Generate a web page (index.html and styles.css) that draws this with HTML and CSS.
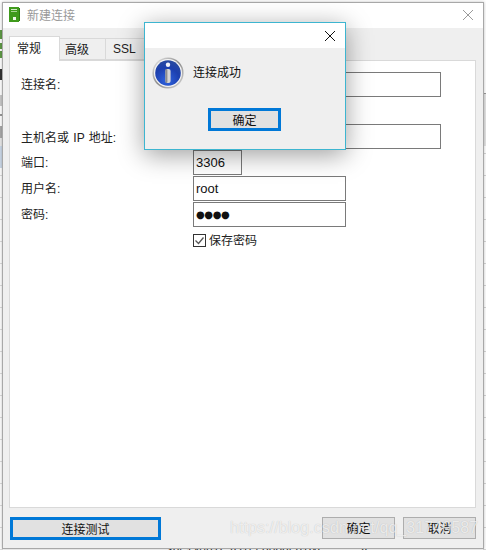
FILE: index.html
```html
<!DOCTYPE html>
<html lang="zh">
<head>
<meta charset="utf-8">
<title>新建连接</title>
<link rel="stylesheet" href="styles.css">
</head>
<body>
<div class="desktop">
  <div class="strip left"></div>
  <div class="strip right"></div>
  <div class="behind-row"><span>*8514081F7D1559098581W</span><span class="behind-y">Y</span></div>
  <section class="win main">
    <header class="titlebar">
      <svg class="appicon" width="11" height="15" viewBox="0 0 11 15"><rect width="10" height="15" fill="#3f9a1c"/><rect x="10" y="1" width="1" height="13" fill="#2b7a10"/><rect x="2" y="2" width="6" height="1" fill="#d5ebc9"/><rect x="2" y="4" width="6" height="1" fill="#a9d394"/><rect x="4" y="10" width="3" height="3" fill="#eef7e8"/></svg>
      <span class="title">新建连接</span>
      <svg class="close" width="12" height="12" viewBox="0 0 12 12"><path d="M1 1l10 10M11 1L1 11" stroke="#9a9a9a" fill="none"/></svg>
    </header>
    <div class="body">
      <nav class="tabs">
        <span class="tab active">常规</span>
        <span class="tab t2">高级</span>
        <span class="tab t3">SSL</span>
      </nav>
      <div class="panel">
        <div class="row r-name"><label>连接名:</label><span class="input wide"></span></div>
        <div class="row r-host"><label>主机名或 IP 地址:</label><span class="input wide"></span></div>
        <div class="row"><label>端口:</label><span class="input port">3306</span></div>
        <div class="row"><label>用户名:</label><span class="input mid">root</span></div>
        <div class="row"><label>密码:</label><span class="input mid dots">●●●●</span></div>
        <div class="row r-check"><label></label><span class="check"><svg width="13" height="13" viewBox="0 0 13 13"><rect x=".5" y=".5" width="12" height="12" fill="#fff" stroke="#333"/><path d="M2.5 6.5l3 3 5-6" fill="none" stroke="#555" stroke-width="1.3"/></svg><span class="check-text">保存密码</span></span></div>
      </div>
      <footer class="actions">
        <button class="btn primary test">连接测试</button>
        <span class="spacer"></span>
        <button class="btn plain">确定</button>
        <button class="btn plain">取消</button>
      </footer>
    </div>
  </section>
  <section class="win dialog">
    <header class="dlg-title">
      <svg class="close" width="12" height="12" viewBox="0 0 12 12"><path d="M1 1l10 10M11 1L1 11" stroke="#111" fill="none"/></svg>
    </header>
    <div class="dlg-body">
      <div class="dlg-msg">
        <svg width="32" height="32" viewBox="0 0 32 32">
          <defs>
            <radialGradient id="blue" cx=".45" cy=".8" r=".85"><stop offset="0" stop-color="#2f63e0"/><stop offset=".6" stop-color="#1c3fae"/><stop offset="1" stop-color="#2a4c9c"/></radialGradient>
            <linearGradient id="rim" x1="0" y1="0" x2="1" y2="1"><stop offset="0" stop-color="#f0f0f0"/><stop offset=".5" stop-color="#8b8b8b"/><stop offset="1" stop-color="#dcdcdc"/></linearGradient>
          </defs>
          <circle cx="16" cy="16" r="15.6" fill="url(#rim)"/>
          <circle cx="16" cy="16" r="14" fill="#f4f4f4"/>
          <circle cx="16" cy="16" r="12.8" fill="url(#blue)"/>
          <circle cx="16" cy="7.8" r="2.2" fill="#f2f4fa"/>
          <rect x="13.4" y="12" width="5.2" height="14" rx="2" fill="#d6d6d6"/>
          <rect x="13.4" y="12" width="2" height="14" rx="1" fill="#8d8d8d"/>
        </svg>
        <span class="dlg-text">连接成功</span>
      </div>
      <button class="btn primary ok">确定</button>
    </div>
  </section>
  <div class="watermark">https://blog.csdn.net/qq_31749587</div>
</div>
</body>
</html>
```
FILE: styles.css
```css
* { box-sizing: border-box; }
html, body { margin: 0; height: 100%; }
body { font-family: "Liberation Sans", "Noto Sans CJK SC", sans-serif; font-size: 12px; color: #111; background: #fff; overflow: hidden; }
.desktop { position: relative; width: 486px; height: 550px; overflow: hidden; background: #fff; }
.strip { position: absolute; top: 0; width: 3px; height: 550px; }
.strip.left { left: 0; background:
  linear-gradient(#fff 0 30px, #5f9a46 30px 39px, #fff 39px 43px, #5f9a46 43px 49px, #fff 49px 51px, #5f9a46 51px 58px, #fff 58px 69px, #333 69px 80px, #fff 80px 95px, #c9c9c9 95px 106px, #fff 106px 114px, #999 114px 116px, #fff 116px 126px, #aaa 126px 138px, #e8e8e8 138px 146px, #ccd9e8 146px 168px, transparent 168px),
  repeating-linear-gradient(#fff 0 21px, #ddd 21px 22px); }
.strip.right { right: 0; background:
  linear-gradient(#fff 0 93px, #999 93px 94px, #e4e4e4 94px 146px, transparent 146px),
  repeating-linear-gradient(#fff 0 21px, #d6d6d6 21px 22px); }
.behind-row { position: absolute; left: 168px; top: 545px; display: flex; gap: 40px; font-size: 12px; color: #333; white-space: nowrap; }
.win { position: absolute; }
.main { left: 2px; top: 2px; width: 482px; height: 547px; border: 1px solid #a8a8a8; background: #efefef; display: flex; flex-direction: column; box-shadow: 0 0 3px rgba(0,0,0,.25); z-index: 0; }
.titlebar { height: 25px; background: #fff; display: flex; align-items: center; padding: 0 9px 2px 6px; flex: none; }
.appicon { flex: none; }
.title { margin-left: 7px; color: #999; flex: 1; }
.body { flex: 1; display: flex; flex-direction: column; padding: 8px 7px 0 6px; min-height: 0; }
.tabs { display: flex; height: 24px; align-items: flex-end; position: relative; z-index: 1; flex: none; }
.tab { display: flex; align-items: center; height: 22px; border: 1px solid #d9d9d9; border-left: 0; background: #efefef; color: #222; }
.tab.active { height: 25px; width: 51px; background: #fff; border: 1px solid #d9d9d9; border-bottom: 0; padding: 0 0 4px 7px; margin-bottom: -1px; }
.t2 { width: 46px; padding: 0 0 1px 5px; }
.t3 { width: 46px; padding: 0 0 1px 7px; }
.panel { height: 448px; flex: none; background: #fff; border: 1px solid #d9d9d9; padding-top: 11px; display: flex; flex-direction: column; gap: 1px; }
.row { display: flex; align-items: center; height: 25px; }
.row label { width: 183px; padding: 0 0 2px 11px; flex: none; color: #222; }
.r-name { align-items: flex-start; }
.r-name label { padding-top: 3px; }
.r-host { margin-top: 26px; }
.r-host label { padding: 0 0 0 11px; word-spacing: 1px; }
.input { display: flex; align-items: center; height: 25px; border: 1px solid #7a7a7a; background: #fff; padding-left: 2px; font-size: 13px; color: #111; }
.wide { width: 248px; }
.port { width: 49px; }
.mid { width: 153px; }
.dots { font-family: "DejaVu Sans", sans-serif; font-size: 10px; letter-spacing: -.4px; }
.r-check { height: 13px; margin-top: 6px; }
.check { display: flex; align-items: center; gap: 3px; color: #222; }
.check svg { flex: none; }
.check-text { margin-top: -2px; }
.actions { display: flex; align-items: flex-start; gap: 8px; padding: 9px 0 0 1px; }
.spacer { flex: 1; }
.btn { font: inherit; color: #111; background: #e1e1e1; height: 23px; padding: 0 0 2px; border: 1px solid #adadad; display: block; }
.primary { border: 3px solid #0078d7; padding: 0 0 1px; }
.test { width: 151px; }
.plain { width: 73px; height: 22px; }
.dialog { left: 144px; top: 22px; width: 202px; height: 128px; border: 1px solid #3db5d0; background: #efefef; box-shadow: 0 5px 24px rgba(0,0,0,.38); display: flex; flex-direction: column; z-index: 1; }
.dlg-title { height: 25px; background: #fff; display: flex; align-items: center; justify-content: flex-end; padding: 0 9px 0 0; flex: none; }
.dlg-body { flex: 1; display: flex; flex-direction: column; align-items: flex-start; }
.dlg-msg { display: flex; align-items: center; gap: 9px; padding: 7px 0 0 7px; height: 43px; }
.dlg-text { color: #111; margin-bottom: 3px; }
.ok { width: 73px; margin: 17px 0 0 63px; }
.watermark { position: absolute; z-index: 2; left: 230px; top: 519px; width: 247px; font-size: 16px; letter-spacing: .08px; color: rgba(255,255,255,.72); text-shadow: 0 0 1px rgba(0,0,0,.22); white-space: nowrap; pointer-events: none; }
```
